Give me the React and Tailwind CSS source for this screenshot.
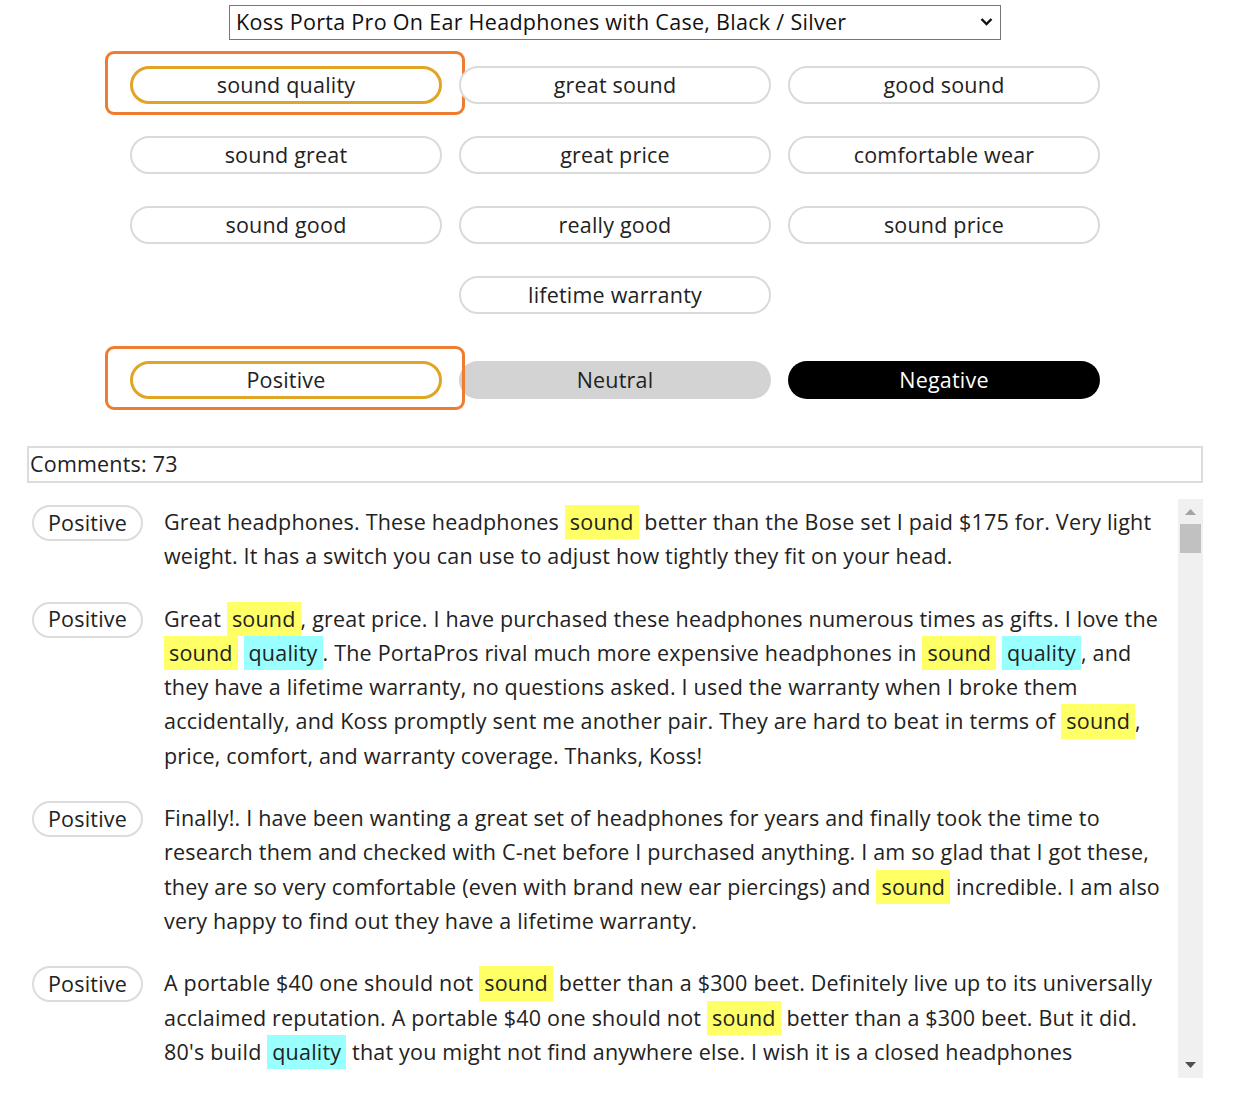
import React from "react";

const keywords = [
  "sound quality",
  "great sound",
  "good sound",
  "sound great",
  "great price",
  "comfortable wear",
  "sound good",
  "really good",
  "sound price",
  "lifetime warranty",
];

const font = { fontFamily: "'Open Sans', 'Noto Sans', sans-serif" };

function Y({ children }) {
  return <span className="inline-block bg-[#ffff66] px-[5px]">{children}</span>;
}

function C({ children }) {
  return <span className="inline-block bg-[#99ffff] px-[5px]">{children}</span>;
}

function Pill() {
  return (
    <div className="flex h-[36px] w-[111px] shrink-0 items-center justify-center rounded-full border-2 border-[#dcdcdc] text-[21.5px] tracking-[0.2px] text-[#222]">
      Positive
    </div>
  );
}

function Comment({ children }) {
  return (
    <div className="flex items-start gap-[21px] pb-[28px] pl-[5px]">
      <Pill />
      <p className="flex-1 pr-[4px] text-[21.5px] leading-[34.3px] tracking-[0.2px] text-[#222]">
        {children}
      </p>
    </div>
  );
}

const btn = "h-[38px] w-[312px] rounded-[19px] text-[21.5px] tracking-[0.2px]";

export default function App() {
  return (
    <div className="w-[1240px] bg-white pt-[5px] pb-[34px]" style={font}>
      <div className="ml-[27px] w-[1176px]">
        {/* product select */}
        <div className="relative mx-auto h-[35px] w-[772px]">
          <select className="h-full w-full appearance-none rounded-none border border-[#767676] bg-white pl-[6px] text-[21.5px] tracking-[0.3px] text-[#111]">
            <option>Koss Porta Pro On Ear Headphones with Case, Black / Silver</option>
          </select>
          <svg
            className="pointer-events-none absolute right-[8px] top-[12px]"
            width="13"
            height="10"
            viewBox="0 0 13 10"
          >
            <path d="M1.5 2 L6.5 7 L11.5 2" fill="none" stroke="#111" strokeWidth="2.4" />
          </svg>
        </div>

        {/* keyword buttons */}
        <div className="mx-auto mt-[26px] flex w-[972px] flex-wrap justify-center gap-x-[17px] gap-y-[32px]">
          {keywords.map((k, idx) => {
            const active = idx === 0;
            return (
              <div key={k} className="relative">
                <button
                  className={
                    active
                      ? btn + " border-[3px] border-[#e0a526] bg-white text-[#222]"
                      : btn + " border-2 border-[#dadada] bg-white text-[#222]"
                  }
                >
                  {k}
                </button>
                {active && (
                  <div className="pointer-events-none absolute -bottom-[11px] -left-[25px] -right-[23px] -top-[15px] rounded-[9px] border-[3.5px] border-[#ee7d31]" />
                )}
              </div>
            );
          })}
        </div>

        {/* sentiment buttons */}
        <div className="mx-auto mt-[47px] flex w-[972px] justify-center gap-x-[17px]">
          <div className="relative">
            <button className={btn + " border-[3px] border-[#e0a526] bg-white text-[#222]"}>
              Positive
            </button>
            <div className="pointer-events-none absolute -bottom-[11px] -left-[25px] -right-[23px] -top-[15px] rounded-[9px] border-[3.5px] border-[#ee7d31]" />
          </div>
          <button className={btn + " bg-[#d3d3d3] text-[#222]"}>Neutral</button>
          <button className={btn + " bg-black text-white"}>Negative</button>
        </div>

        {/* comments count */}
        <div className="mt-[47px] flex h-[37px] items-center border-2 border-[#dcdcdc] pl-[1px] text-[21.5px] tracking-[0.2px] text-[#222]">
          Comments: 73
        </div>

        {/* comments list */}
        <div className="mt-[16px] flex h-[579px]">
          <div className="flex-1 overflow-hidden pt-[6px]">
            <Comment>
              Great headphones. These headphones <Y>sound</Y> better than the Bose set I paid $175 for.
              Very light weight. It has a switch you can use to adjust how tightly they fit on your head.
            </Comment>
            <Comment>
              Great <span className="whitespace-nowrap"><Y>sound</Y>,</span> great price. I have purchased
              these headphones numerous times as gifts. I love the <Y>sound</Y>{" "}
              <span className="whitespace-nowrap"><C>quality</C>.</span> The PortaPros rival much more
              expensive headphones in <Y>sound</Y>{" "}
              <span className="whitespace-nowrap"><C>quality</C>,</span> and they have a lifetime warranty,
              no questions asked. I used the warranty when I broke them accidentally, and Koss promptly
              sent me another pair. They are hard to beat in terms of{" "}
              <span className="whitespace-nowrap"><Y>sound</Y>,</span> price, comfort, and warranty
              coverage. Thanks, Koss!
            </Comment>
            <Comment>
              Finally!. I have been wanting a great set of headphones for years and finally took the
              time to research them and checked with C-net before I purchased anything. I am so glad
              that I got these, they are so very comfortable (even with brand new ear piercings) and{" "}
              <Y>sound</Y> incredible. I am also very happy to find out they have a lifetime warranty.
            </Comment>
            <Comment>
              A portable $40 one should not <Y>sound</Y> better than a $300 beet. Definitely live up to
              its universally acclaimed reputation. A portable $40 one should not <Y>sound</Y> better
              than a $300 beet. But it did. 80's build <C>quality</C> that you might not find anywhere
              else. I wish it is a closed headphones otherwise it would be perfect for commuting.
            </Comment>
          </div>

          {/* scrollbar */}
          <div className="flex w-[25px] shrink-0 flex-col items-center bg-[#f0f0f0]">
            <svg className="mt-[10px]" width="11" height="6" viewBox="0 0 11 6">
              <path d="M0 6 L5.5 0 L11 6 Z" fill="#a3a3a3" />
            </svg>
            <div className="mt-[9px] h-[29px] w-[21px] bg-[#c1c1c1]" />
            <div className="flex-1" />
            <svg className="mb-[10px]" width="11" height="6" viewBox="0 0 11 6">
              <path d="M0 0 L11 0 L5.5 6 Z" fill="#505050" />
            </svg>
          </div>
        </div>
      </div>
    </div>
  );
}
